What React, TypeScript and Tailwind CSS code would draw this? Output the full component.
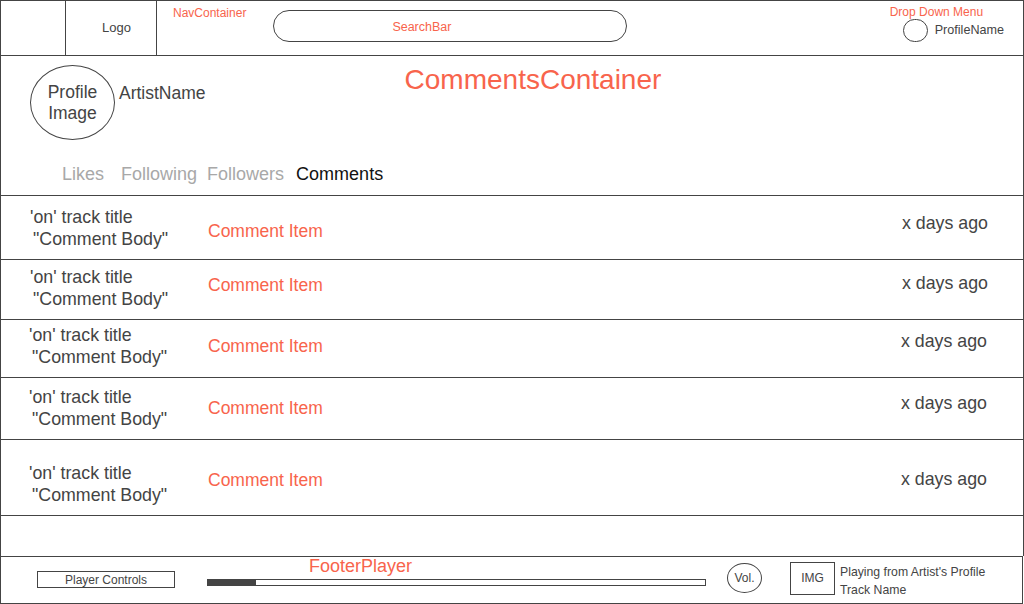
import React from 'react';

const RED = 'text-[#f8644c]';

const ROWS = [
  { h: 'h-[64px]', t: 'pt-[10px]', c: 'pt-[24px]', d: 'pt-[16px]', pl: 'pl-[29px]', pr: 'pr-[35px]' },
  { h: 'h-[60px]', t: 'pt-[6px]', c: 'pt-[14px]', d: 'pt-[12px]', pl: 'pl-[29px]', pr: 'pr-[35px]' },
  { h: 'h-[58px]', t: 'pt-[4px]', c: 'pt-[15px]', d: 'pt-[10px]', pl: 'pl-[28px]', pr: 'pr-[36px]' },
  { h: 'h-[62px]', t: 'pt-[8px]', c: 'pt-[19px]', d: 'pt-[14px]', pl: 'pl-[28px]', pr: 'pr-[36px]' },
  { h: 'h-[76px]', t: 'pt-[22px]', c: 'pt-[29px]', d: 'pt-[28px]', pl: 'pl-[28px]', pr: 'pr-[36px]' },
];

const CommentRow = ({ row }: { row: (typeof ROWS)[number] }) => (
  <div className={`flex items-start border-b border-[#444] text-[17.8px] ${row.h}`}>
    <div className={`w-[207px] shrink-0 leading-[22px] ${row.t} ${row.pl}`}>
      <p>'on' track title</p>
      <p className="pl-[3px]">"Comment Body"</p>
    </div>
    <p className={`leading-[22px] text-[17.5px] ${RED} ${row.c}`}>Comment Item</p>
    <p className={`ml-auto leading-[22px] ${row.d} ${row.pr}`}>x days ago</p>
  </div>
);

export default function App() {
  return (
    <div className="w-[1024px] h-[604px] flex flex-col bg-white text-[#444] font-['Liberation_Sans',Arial,sans-serif] overflow-hidden">
      {/* Nav */}
      <header className="h-[56px] shrink-0 flex border border-[#444]">
        <div className="w-[65px] border-r border-[#444]" />
        <div className="w-[91px] border-r border-[#444] flex items-center pl-[36px] text-[13px]">Logo</div>
        <div className="flex-1 flex items-start">
          <p className={`pl-[16px] pt-[5px] text-[12px] leading-[15px] ${RED}`}>NavContainer</p>
          <div className="ml-[27px] mt-[9px] w-[354px] h-[32px] rounded-full border border-[#444] flex items-center pl-[118px]">
            <span className={`text-[12.5px] pt-[2px] ${RED}`}>SearchBar</span>
          </div>
          <div className="ml-auto pr-[19px] pt-[4px] flex flex-col items-start">
            <p className={`text-[12px] leading-[15px] ${RED}`}>Drop Down Menu</p>
            <div className="flex items-center ml-[13px] -mt-[1px]">
              <div className="w-[25px] h-[23px] rounded-full border border-[#444]" />
              <span className="ml-[7px] text-[12.6px]">ProfileName</span>
            </div>
          </div>
        </div>
      </header>

      {/* Comments container */}
      <main className="flex-1 flex flex-col border-x border-[#444]">
        <section className="h-[140px] shrink-0 border-b border-[#444] flex flex-col">
          <div className="flex items-start">
            <div className="ml-[29px] mt-[9px] w-[85px] h-[75px] rounded-[50%] border border-[#444] flex items-center justify-center text-center text-[17.5px] leading-[21px]">
              Profile<br />Image
            </div>
            <p className="ml-[4px] mt-[26px] text-[17.5px] leading-[22px]">ArtistName</p>
            <h1 className={`ml-[199px] mt-[8px] text-[28px] leading-[32px] ${RED}`}>CommentsContainer</h1>
          </div>
          <nav className="mt-[23px] pl-[61px] flex text-[18px] leading-[22px] text-[#a8a8a8]">
            <span>Likes</span>
            <span className="ml-[17px]">Following</span>
            <span className="ml-[10px]">Followers</span>
            <span className="ml-[12px] text-[#111]">Comments</span>
          </nav>
        </section>
        {ROWS.map((row, i) => (
          <CommentRow key={i} row={row} />
        ))}
      </main>

      {/* Footer player */}
      <footer className="h-[48px] w-[1023px] shrink-0 border border-[#444] flex items-start text-[12px]">
        <div className="ml-[36px] mt-[14px] w-[138px] h-[17px] border border-[#444] flex items-center justify-center leading-none">
          Player Controls
        </div>
        <div className="ml-[32px] w-[499px] flex flex-col">
          <p className={`pl-[102px] text-[18px] leading-[18px] ${RED}`}>FooterPlayer</p>
          <div className="mt-[4px] h-[7px] border border-[#444] flex">
            <div className="w-[48px] bg-[#444]" />
          </div>
        </div>
        <div className="ml-[21px] mt-[6px] w-[35px] h-[30px] rounded-[50%] border border-[#444] flex items-center justify-center">
          Vol.
        </div>
        <div className="ml-[28px] mt-[5px] w-[45px] h-[33px] border border-[#444] flex items-center justify-center pb-[2px]">
          IMG
        </div>
        <div className="ml-[5px] mt-[6px] leading-[18px] text-[12.25px]">
          <p>Playing from Artist's Profile</p>
          <p>Track Name</p>
        </div>
      </footer>
    </div>
  );
}
